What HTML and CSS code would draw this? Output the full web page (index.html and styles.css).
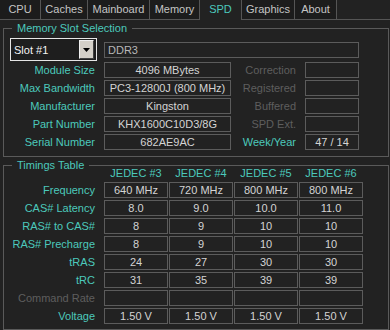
FILE: index.html
```html
<!DOCTYPE html>
<html>
<head>
<meta charset="utf-8">
<link rel="stylesheet" href="styles.css">
</head>
<body>
<div class="tabs">
  <div class="tab t-cpu">CPU</div>
  <div class="tab t-caches">Caches</div>
  <div class="tab t-mainboard">Mainboard</div>
  <div class="tab t-memory">Memory</div>
  <div class="tab t-spd active">SPD</div>
  <div class="tab t-graphics">Graphics</div>
  <div class="tab t-about">About</div>
  <div class="tab-fill"></div>
</div>

<fieldset class="group slot-group">
  <legend>Memory Slot Selection</legend>
  <div class="slot-row">
    <div class="select">
      <span class="select-text">Slot #1</span>
      <span class="select-btn"><svg width="7" height="4" viewBox="0 0 7 4"><path d="M0 0H7L3.5 4Z" fill="#000"/></svg></span>
    </div>
    <div class="box type-box">DDR3</div>
  </div>
  <div class="info-grid">
    <div class="lbl">Module Size</div><div class="box">4096 MBytes</div><div class="lbl dim">Correction</div><div class="box"></div>
    <div class="lbl">Max Bandwidth</div><div class="box">PC3-12800J (800 MHz)</div><div class="lbl dim">Registered</div><div class="box"></div>
    <div class="lbl">Manufacturer</div><div class="box">Kingston</div><div class="lbl dim">Buffered</div><div class="box"></div>
    <div class="lbl">Part Number</div><div class="box">KHX1600C10D3/8G</div><div class="lbl dim">SPD Ext.</div><div class="box"></div>
    <div class="lbl">Serial Number</div><div class="box">682AE9AC</div><div class="lbl">Week/Year</div><div class="box">47 / 14</div>
  </div>
</fieldset>

<fieldset class="group timing-group">
  <legend>Timings Table</legend>
  <div class="timing-head">
    <div></div><div class="col-h">JEDEC #3</div><div class="col-h">JEDEC #4</div><div class="col-h">JEDEC #5</div><div class="col-h">JEDEC #6</div>
  </div>
  <div class="timing-grid">
    <div class="lbl">Frequency</div><div class="box">640 MHz</div><div class="box">720 MHz</div><div class="box">800 MHz</div><div class="box">800 MHz</div>
    <div class="lbl">CAS# Latency</div><div class="box">8.0</div><div class="box">9.0</div><div class="box">10.0</div><div class="box">11.0</div>
    <div class="lbl">RAS# to CAS#</div><div class="box">8</div><div class="box">9</div><div class="box">10</div><div class="box">10</div>
    <div class="lbl">RAS# Precharge</div><div class="box">8</div><div class="box">9</div><div class="box">10</div><div class="box">10</div>
    <div class="lbl">tRAS</div><div class="box">24</div><div class="box">27</div><div class="box">30</div><div class="box">30</div>
    <div class="lbl">tRC</div><div class="box">31</div><div class="box">35</div><div class="box">39</div><div class="box">39</div>
    <div class="lbl dim">Command Rate</div><div class="box"></div><div class="box"></div><div class="box"></div><div class="box"></div>
    <div class="lbl">Voltage</div><div class="box">1.50 V</div><div class="box">1.50 V</div><div class="box">1.50 V</div><div class="box">1.50 V</div>
  </div>
</fieldset>
</body>
</html>
```

FILE: styles.css
```css
* { box-sizing: border-box; }
html, body {
  margin: 0;
  padding: 0;
  background: #222222;
  width: 390px;
  height: 330px;
  overflow: hidden;
}
body {
  font-family: "Liberation Sans", Arial, sans-serif;
  font-size: 11px;
  color: #d4d4d4;
}

/* tabs */
.tabs {
  display: flex;
  height: 20px;
}
.tab {
  height: 20px;
  line-height: 19px;
  text-align: center;
  color: #c4c4c4;
  background: #1c1c1c;
  border-right: 1px solid #555;
  border-bottom: 1px solid #555;
}
.t-cpu { width: 41px; }
.t-caches { width: 47px; }
.t-mainboard { width: 62px; }
.t-memory { width: 50px; }
.t-spd { width: 41px; }
.t-graphics { width: 54px; border-left: 1px solid #555; }
.t-about { width: 42px; }
.tab.active {
  color: #4cc9bc;
  background: #222222;
  border: none;
}
.tab-fill {
  flex: 1;
  border-bottom: 1px solid #555;
}

/* groups */
.group {
  margin: 2px 0 0 3px;
  width: 386px;
  min-width: 0;
  padding: 0;
  border: 1px solid #5a5a5a;
}
.group legend {
  margin-left: 8px;
  padding: 0 5px;
  line-height: 13px;
  color: #4cc9bc;
}
.slot-group { padding-bottom: 6px; }
.timing-group { padding-bottom: 5px; }

.slot-row {
  display: flex;
  align-items: center;
  margin: 3px 0 0 6px;
}
.select {
  width: 87px;
  height: 23px;
  border: 1px solid #e6e6e6;
  background: #1e1e1e;
  display: flex;
  align-items: center;
  justify-content: space-between;
  padding: 1px 2px 1px 2px;
  margin-right: 7px;
}
.select-text {
  color: #f4f4f4;
  font-size: 11px;
  padding-left: 1px;
}
.select-btn {
  width: 15px;
  height: 19px;
  background: #d4d0c8;
  border: 1px solid #404040;
  border-top-color: #f0f0f0;
  border-left-color: #f0f0f0;
  display: flex;
  align-items: center;
  justify-content: center;
}
.box {
  height: 16px;
  line-height: 15px;
  border: 1px solid #5c5c5c;
  text-align: center;
  color: #d4d4d4;
  white-space: nowrap;
  overflow: hidden;
}
.type-box {
  width: 255px;
  text-align: left;
  padding-left: 3px;
  color: #b8b8b8;
}
.lbl {
  text-align: right;
  padding-right: 9px;
  line-height: 16px;
  color: #4cc9bc;
  white-space: nowrap;
}
.lbl.dim { color: #5e5e5e; }

.info-grid {
  display: grid;
  grid-template-columns: 100px 127px 74px 54px;
  grid-auto-rows: 16px;
  row-gap: 2px;
  margin-top: 1px;
}

.timing-head {
  display: grid;
  grid-template-columns: 99px repeat(4, 64px);
  column-gap: 1px;
  height: 13px;
  line-height: 13px;
  margin: -5px 0 2px 0;
}
.col-h {
  text-align: center;
  color: #4cc9bc;
}
.timing-grid {
  display: grid;
  grid-template-columns: 99px repeat(4, 64px);
  column-gap: 1px;
  grid-auto-rows: 16px;
  row-gap: 2px;
}
.timing-grid .lbl { padding-right: 8px; }
```
